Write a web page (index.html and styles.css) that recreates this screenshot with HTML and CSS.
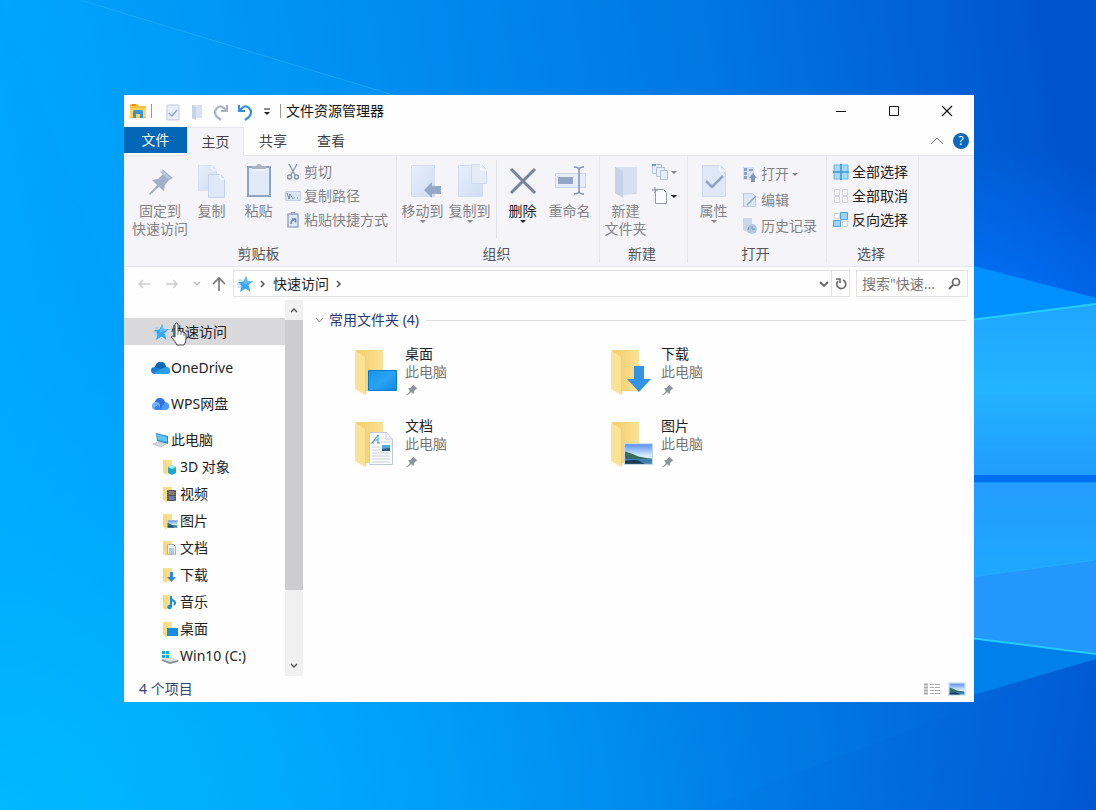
FILE: index.html
```html
<!DOCTYPE html>
<html lang="zh-CN">
<head>
<meta charset="utf-8">
<meta name="viewport" content="width=device-width, initial-scale=1">
<title>文件资源管理器</title>
<link rel="stylesheet" href="styles.css">
</head>
<body>
<svg width="0" height="0" class="defs" aria-hidden="true">
  <defs>
    <linearGradient id="gFolder" x1="0" x2="1"><stop offset="0" stop-color="#f3ce6c"/><stop offset=".4" stop-color="#f6d47a"/><stop offset="1" stop-color="#fce295"/></linearGradient>
    <linearGradient id="gBlue" x1="0" y1="0" x2="1" y2="1"><stop offset="0" stop-color="#1593ec"/><stop offset=".5" stop-color="#2ba3f4"/><stop offset="1" stop-color="#0d87e2"/></linearGradient>
    <linearGradient id="gPaper" x1="0" x2="1" y2="1"><stop offset="0" stop-color="#e7effb"/><stop offset="1" stop-color="#cfdcf2"/></linearGradient>
    <linearGradient id="gSky" x2="0" y2="1"><stop offset="0" stop-color="#5a8ff0"/><stop offset=".6" stop-color="#d8f1fb"/></linearGradient>
  </defs>
  <symbol id="folder" viewBox="0 0 44 50"><path d="M2 3h27v41H11z" fill="url(#gFolder)"/><path d="M1 3l10 7v38L1 42z" fill="#fbe194"/><path d="M11 10v38l1-2V9z" fill="#f2cf75"/></symbol>
  <symbol id="mini" viewBox="0 0 16 16"><path d="M1 1h9v13H4z" fill="#fae08c"/><path d="M1 1l4 2v13l-4-2z" fill="#f8d97f"/></symbol>
  <symbol id="pin" viewBox="0 0 24 24"><path d="M14 1l9 8-3 1-4 5-1 5-5-4-8 7-1-1 7-8-4-5 5-1 4-4z"/></symbol>
  <symbol id="star" viewBox="0 0 16 16"><path d="M9 0l1.500 5L16 5l-4.500 4 2 7-5-3.500L3 16l1.500-6L1 6l5.500-.5z" fill="#35a7f3"/><path d="M0 8h4M1 11h3M2 4h3" stroke="#8ec9f3" stroke-width="1"/><path d="M9 0l1.500 5L16 5l-5.500 2.500-4 1z" fill="#62bdf8"/></symbol>
  <symbol id="picture" viewBox="0 0 28 21"><path fill="#f5f9fc" stroke="#c9d5df" d="M.5.5h27v20H.5z"/><path fill="url(#gSky)" d="M1 1h26v19H1z"/><path d="M1 8l6 2 7 3 12 2v1H1z" fill="#356c5b"/><path d="M1 15h26v5H1z" fill="#3d80b0"/><path d="M1 17l11-1 8 4H1z" fill="#183b55"/></symbol>
</svg>
<main class="desktop">
  <svg class="wallpaper" viewBox="0 0 1096 810" preserveAspectRatio="none" aria-hidden="true">
    <defs>
      <linearGradient id="base" x1="0" y1=".5" x2="1" y2=".38"><stop offset="0" stop-color="#00a8ff"/><stop offset=".4" stop-color="#008df0"/><stop offset=".7" stop-color="#0076e2"/><stop offset="1" stop-color="#0054ce"/></linearGradient>
      <radialGradient id="leftGlow" cx="0" cy="1" r=".7"><stop offset="0" stop-color="#00b9ff"/><stop offset="1" stop-color="#00a8ff" stop-opacity="0"/></radialGradient>
      <radialGradient id="rightGlow" cx=".89" cy=".42" r=".24"><stop offset="0" stop-color="#0078ff"/><stop offset="1" stop-color="#0070ff" stop-opacity="0"/></radialGradient>
      <linearGradient id="beam" x2="0" y2="1"><stop offset="0" stop-color="#1fa6ff"/><stop offset=".5" stop-color="#22b3ff"/><stop offset="1" stop-color="#219cff"/></linearGradient>
      <linearGradient id="beamLow" x2="0" y2="1"><stop offset="0" stop-color="#239cff"/><stop offset="1" stop-color="#1ea8ff"/></linearGradient>
      <linearGradient id="corner" gradientUnits="userSpaceOnUse" x1="700" y1="700" x2="1096" y2="800"><stop offset="0" stop-color="#0078e0" stop-opacity="0"/><stop offset=".8" stop-color="#0060d8" stop-opacity=".8"/><stop offset="1" stop-color="#0056d0"/></linearGradient>
    </defs>
    <path fill="url(#base)" d="M0 0h1096v810H0z"/>
    <path fill="url(#leftGlow)" d="M0 0h1096v810H0z"/>
    <path fill="url(#rightGlow)" d="M0 0h1096v810H0z"/>
    <path fill="#00b0ff" opacity=".13" d="M0 0h80l320 97v20H124v200L0 0z"/>
    <path stroke="#38b5fa" opacity=".45" d="M80 0l320 97"/>
    <path fill="url(#corner)" d="M700 810l396-151v151z"/>
    <path fill="#0090ff" d="M970 265l126 33v8l-126 15z"/>
    <path fill="url(#beam)" d="M970 320l126-17v172H970z"/>
    <path fill="#0070f4" d="M970 475h126v8H970z"/>
    <path fill="url(#beamLow)" d="M970 483h126v77l-126 17z"/>
    <path fill="#2497fc" d="M970 577l126-17v95l-126-17z"/>
    <path fill="#0080ea" d="M970 638l126 17v4l-126 37z"/>
    <path stroke="#24ccff" stroke-width="2" d="M970 320l126-16M970 638l126 16"/>
    <path stroke="#22b0ff" d="M970 577l126-17M970 483h126"/>
  </svg>

  <section class="window" aria-label="文件资源管理器">
    <header class="titlebar">
      <svg class="app-icon" width="18" height="16" viewBox="0 0 18 16"><path d="M1 1h7l2 2h7v12H1z" fill="#f5bd3c"/><path d="M1 5h16v9H1z" fill="#ffd560"/><path d="M3 2h4" stroke="#e0912c" stroke-width="2"/><path d="M4 15V9q0-2 2-2h6q2 0 2 2v6h-3v-4H7v4z" fill="#3c92d3"/></svg>
      <span class="bar-line"></span>
      <div class="quick-tools">
        <button aria-label="属性"><svg width="14" height="17" viewBox="0 0 14 17"><path d="M1 1h12v15H1z" fill="#e9eefa" stroke="#c1c9de"/><path d="M3 9l3 3 5-6" fill="none" stroke="#8fa4cb" stroke-width="1.500"/></svg></button>
        <button aria-label="新建文件夹"><svg width="12" height="17" viewBox="0 0 12 17"><path d="M1 1h10v13H5z" fill="#d9e1f0"/><path d="M1 1l4 2v13l-4-2z" fill="#c6d2e8"/></svg></button>
        <button aria-label="重做"><svg width="16" height="17" viewBox="0 0 16 17"><path d="M14 1v6H8M13 6Q8 0 4 4T4 13l4 3" fill="none" stroke="#a9b3c4" stroke-width="2.200"/></svg></button>
        <button aria-label="撤消"><svg width="16" height="17" viewBox="0 0 16 17"><path d="M2 1v6h6M3 6q5-6 9-2t0 9l-4 3" fill="none" stroke="#398ed5" stroke-width="2.200"/></svg></button>
        <button class="more" aria-label="自定义快速访问工具栏"><svg width="8" height="10" viewBox="0 0 8 10"><path d="M1 2h6" stroke="#222"/><path d="M1 5h6L4 8z" fill="#222"/></svg></button>
      </div>
      <span class="bar-line"></span>
      <h1>文件资源管理器</h1>
      <div class="window-buttons">
        <button aria-label="最小化"><svg width="12" height="12" viewBox="0 0 12 12"><path d="M1 6.500h10" stroke="#111"/></svg></button>
        <button aria-label="最大化"><svg width="12" height="12" viewBox="0 0 12 12"><path d="M1.500 1.500h9v9h-9z" fill="none" stroke="#111"/></svg></button>
        <button aria-label="关闭"><svg width="12" height="12" viewBox="0 0 12 12"><path d="M1 1l10 10M11 1L1 11" stroke="#111" stroke-width="1.200"/></svg></button>
      </div>
    </header>

    <nav class="tabs" aria-label="功能区">
      <button class="tab file">文件</button>
      <button class="tab current">主页</button>
      <button class="tab">共享</button>
      <button class="tab">查看</button>
      <div class="tab-tools">
        <button aria-label="折叠功能区"><svg width="12" height="8" viewBox="0 0 12 8"><path d="M0 7l6-6 6 6" fill="none" stroke="#777"/></svg></button>
        <button class="help" aria-label="帮助">?</button>
      </div>
    </nav>

    <div class="ribbon">
      <section class="group clipboard">
        <div class="tools">
          <button class="large wide muted"><svg width="36" height="40" viewBox="0 0 36 40"><path d="M20 7l11 9-4 2-4 5-1 6-5-4-9 8-1-1 8-9-5-5 6-1 5-5z" fill="#a3b1c8"/><path d="M20 8l9 8-3 1-8-7z" fill="#bac5d8"/></svg>固定到<br>快速访问</button>
          <button class="large muted"><svg width="36" height="40" viewBox="0 0 36 40"><path d="M4.500 3.500h14l4 4v21h-18z" fill="url(#gPaper)" stroke="#d7e1f3"/><path d="M14.500 12.500h12l4 4v19h-16z" fill="#dee8f8" stroke="#c5d4ec"/><path d="M26 12v5h5M18 3v5h5" fill="none" stroke="#f8fbff"/></svg>复制</button>
          <button class="large muted"><svg width="36" height="40" viewBox="0 0 36 40"><path d="M7 5h22v29H7z" fill="#e0eaf9" stroke="#8ea4c2" stroke-width="2"/><path d="M11 7V4h4q1-2 3-2t3 2h4v3z" fill="#a9b5c5"/><path d="M11 8h14" stroke="#f8fbff"/></svg>粘贴</button>
          <div class="stack">
            <button class="small muted"><svg width="16" height="18" viewBox="0 0 16 18"><path d="M4 1l6 11M12 1L6 12" stroke="#8995aa" stroke-width="1.300"/><g fill="none" stroke="#8995aa" stroke-width="1.500"><circle cx="4.500" cy="14" r="2"/><circle cx="11.500" cy="14" r="2"/></g></svg>剪切</button>
            <button class="small muted"><svg width="16" height="18" viewBox="0 0 16 18"><path d="M.5 4.500h15v9H.5z" fill="#dce5f3" stroke="#c1cee3"/><path d="M2 6l2 6 1-5 3 5M9 11h1m2 0h1" fill="none" stroke="#7184a6"/></svg>复制路径</button>
            <button class="small muted"><svg width="16" height="18" viewBox="0 0 16 18"><path d="M3 3h10v13H3z" fill="#dfe8f7" stroke="#98a9c4" stroke-width="1.500"/><path d="M6 1h4v3H6z" fill="#98a9c4"/><path d="M6 13q0-4 3-4M7 8h3.500v3.500" fill="none" stroke="#6581b1" stroke-width="1.500"/></svg>粘贴快捷方式</button>
          </div>
        </div>
        <h2>剪贴板</h2>
      </section>
      <section class="group organize">
        <div class="tools">
          <button class="large muted drop"><svg width="36" height="40" viewBox="0 0 36 40"><path d="M6.500 3.500h23v31h-23z" fill="url(#gPaper)" stroke="#d2def0"/><path d="M19 28l8-8v4h9v8h-9v4z" fill="#96a8c5"/></svg>移动到</button>
          <button class="large muted drop"><svg width="36" height="40" viewBox="0 0 36 40"><path d="M6.500 3.500h24v31h-24z" fill="url(#gPaper)" stroke="#d2def0"/><path d="M19.500 2.500h10l5 5v14h-15z" fill="#e4ecf8" stroke="#ccd9ed"/><path d="M29 2v6h6" fill="none" stroke="#fff"/></svg>复制到</button>
          <span class="tool-line"></span>
          <button class="large drop"><svg width="36" height="40" viewBox="0 0 36 40"><path d="M6 7l24 24M30 7L6 31" stroke="#74839e" stroke-width="3"/></svg>删除</button>
          <button class="large muted"><svg width="36" height="40" viewBox="0 0 36 40"><path d="M3.500 11.500h30v14h-30z" fill="#e5edfa" stroke="#c9d6eb"/><path d="M6 15h15v7H6z" fill="#93a6c5"/><path d="M22 5q5 0 5 3 0-3 5-3M27 8v22M22 32q5 0 5-3 0 3 5 3" fill="none" stroke="#8294b0" stroke-width="1.500"/></svg>重命名</button>
        </div>
        <h2>组织</h2>
      </section>
      <section class="group create">
        <div class="tools">
          <button class="large muted"><svg width="36" height="40" viewBox="0 0 36 40"><path d="M7 5h22v27l-14 1z" fill="#d6e0f0"/><path d="M7 5l8 4v27l-8-5z" fill="#c5d2e8"/></svg>新建<br>文件夹</button>
          <div class="stack">
            <button class="small muted caret" aria-label="新建项目"><svg width="16" height="18" viewBox="0 0 16 18"><g fill="#e5edf9" stroke="#b2c3de"><path d="M.5 1.500h9v9h-9z"/><path d="M4.500 4.500h8v9h-8z"/><path d="M8.500 7.500h7v9h-7z"/></g><path d="M0 2h4" stroke="#7c96bf" stroke-width="2"/></svg></button>
            <button class="small caret" aria-label="轻松访问"><svg width="16" height="18" viewBox="0 0 16 18"><path d="M3.500 2.500h8l3 3v11h-11z" fill="#fbfbfd" stroke="#979ca4"/><path d="M0 3h6M3 0v6" stroke="#8b96a5"/></svg></button>
          </div>
        </div>
        <h2>新建</h2>
      </section>
      <section class="group open">
        <div class="tools">
          <button class="large muted drop"><svg width="36" height="40" viewBox="0 0 36 40"><path d="M6.500 3.500h18l5 5v26h-23z" fill="#dfe8f7" stroke="#ccd9ed"/><path d="M24 3v6h6" fill="none" stroke="#fff"/><path d="M10 19l6 6 11-11" fill="none" stroke="#93a4c1" stroke-width="2.500"/></svg>属性</button>
          <div class="stack loose">
            <button class="small muted caret"><svg width="16" height="18" viewBox="0 0 16 18"><path d="M1 2h11v13H1z" fill="#d5e0f1"/><path d="M2 3h3v3H2zm0 4h3v3H2zm0 4h3v3H2zM7 4h4v2H7z" fill="#8c9fbe"/><path d="M9 17v-4H7l4-5 4 5h-2v4z" fill="#8197bb"/></svg>打开</button>
            <button class="small muted"><svg width="16" height="18" viewBox="0 0 16 18"><path d="M1.500 2.500h9l3 3v10h-12z" fill="#dce7f6" stroke="#b8c9e2"/><path d="M5 14l9-9" stroke="#8ea4c4" stroke-width="1.500"/></svg>编辑</button>
            <button class="small muted"><svg width="16" height="18" viewBox="0 0 16 18"><path d="M1 1h9v14H5l-4-2z" fill="#cbd8eb"/><circle cx="10" cy="12" r="5" fill="#b3c7e4"/><path d="M10 9v3h3M7 10l-1 3" fill="none" stroke="#7991b9"/></svg>历史记录</button>
          </div>
        </div>
        <h2>打开</h2>
      </section>
      <section class="group select">
        <div class="tools">
          <div class="stack">
            <button class="small"><svg width="16" height="18" viewBox="0 0 16 18"><path d="M1 2h14v14H1z" fill="#a8daf8" stroke="#6bb3e6"/><path d="M8 1v16M0 9h16" stroke="#3b96d6" stroke-width="1.500"/></svg>全部选择</button>
            <button class="small"><svg width="16" height="18" viewBox="0 0 16 18"><path d="M1.500 2.500h5v6h-5zm8 0h5v6h-5zm-8 7h5v6h-5zm8 0h5v6h-5z" fill="#fafafd" stroke="#d3d5da"/></svg>全部取消</button>
            <button class="small"><svg width="16" height="18" viewBox="0 0 16 18"><path d="M1.500 2.500h5v5h-5zm8 8h5v5h-5z" fill="#f8f9fd" stroke="#d3d5da"/><path d="M7.500 1.500h7v7h-7zm-7 8h7v6h-7z" fill="#9bd4f7" stroke="#53a2da"/></svg>反向选择</button>
          </div>
        </div>
        <h2>选择</h2>
      </section>
    </div>

    <div class="address-row">
      <div class="history">
        <button aria-label="后退"><svg width="14" height="14" viewBox="0 0 14 14"><path d="M13 7H2m4-4L2 7l4 4" fill="none" stroke="#ccc" stroke-width="1.500"/></svg></button>
        <button aria-label="前进"><svg width="14" height="14" viewBox="0 0 14 14"><path d="M1 7h11M8 3l4 4-4 4" fill="none" stroke="#ccc" stroke-width="1.500"/></svg></button>
        <button class="recent" aria-label="最近位置"><svg width="8" height="8" viewBox="0 0 8 8"><path d="M1 2l3 3 3-3" fill="none" stroke="#bbb" stroke-width="1.300"/></svg></button>
        <button class="up" aria-label="向上"><svg width="14" height="16" viewBox="0 0 14 16"><path d="M7 15V2M1 8l6-6 6 6" fill="none" stroke="#777" stroke-width="1.600"/></svg></button>
      </div>
      <div class="address">
        <svg width="16" height="16"><use href="#star"/></svg>
        <svg width="6" height="8" viewBox="0 0 6 8"><path d="M1 1l3 3-3 3" fill="none" stroke="#555" stroke-width="1.500"/></svg>
        <button class="crumb">快速访问</button>
        <svg width="6" height="8" viewBox="0 0 6 8"><path d="M1 1l3 3-3 3" fill="none" stroke="#555" stroke-width="1.500"/></svg>
        <button class="history-drop" aria-label="以前的位置"><svg width="10" height="8" viewBox="0 0 10 8"><path d="M1 2l4 4 4-4" fill="none" stroke="#666" stroke-width="1.800"/></svg></button>
        <button class="refresh" aria-label="刷新"><svg width="12" height="14" viewBox="0 0 12 14"><path d="M1 2h4v4M8 3a4.500 4.500 0 1 1-5 1" fill="none" stroke="#666" stroke-width="1.600"/></svg></button>
      </div>
      <label class="search">
        <input type="text" aria-label="搜索快速访问" placeholder='搜索"快速...'>
        <svg width="13" height="13" viewBox="0 0 13 13"><circle cx="8" cy="5" r="3.500" fill="none" stroke="#666" stroke-width="1.700"/><path d="M5 8l-4 4" stroke="#666" stroke-width="2"/></svg>
      </label>
    </div>

    <div class="body">
      <nav class="tree" aria-label="导航窗格">
        <a href="#" class="root selected"><svg width="17" height="16" viewBox="-1 0 17 16"><use href="#star" width="16" height="16"/></svg>快速访问
          <svg class="pointer" width="17" height="24" viewBox="0 0 17 24"><path d="M5 14V3q0-2 1.500-2T8 3v6q3-1 3 1 3-1 3 1 2 0 2 2v4q0 3-2 6H7q-1-3-6-8 1-2 4 0z" fill="#fff" stroke="#444"/><path d="M8 9v4m3-3v3m3-2v3" stroke="#777"/></svg></a>
        <a href="#" class="root"><svg width="19" height="16" viewBox="0 0 19 16"><path d="M4 7q1-5 6-5 4 0 5 5 4 0 4 4 0 3-3 3H4q-4 0-4-4 0-3 4-3z" fill="#1681d2"/><path d="M4 7q1-5 6-5 4 0 5 5l-5 2z" fill="#0a68b8"/><path d="M3 13l7-4 5-2q4 0 4 4 0 3-3 3H4z" fill="#299fe9"/></svg>OneDrive</a>
        <a href="#" class="root"><svg width="19" height="16" viewBox="0 0 19 16"><path d="M4 7q0-5 5-5 4 0 5 4 4 1 4 4 0 4-4 4H6z" fill="#2e73df"/><path d="M9 14l5-8q4 1 4 4 0 4-4 4z" fill="#4b9cf6"/><circle cx="5" cy="10" r="4" fill="#6eb0fa"/><path d="M3 12l4-3 4 5H5z" fill="#3a83e8"/></svg>WPS网盘</a>
        <a href="#" class="root"><svg width="17" height="16" viewBox="0 0 17 16"><path d="M4 1l12 3v8L5 9z" fill="#248bd2"/><path d="M5 2l10 3v5L6 8z" fill="#65c2f4"/><path d="M1 12l6-2 7 2-5 3z" fill="#d5d9dc" stroke="#a0a8ad" stroke-width=".6"/></svg>此电脑</a>
        <a href="#" class="leaf"><svg width="16" height="16" viewBox="0 0 16 16"><use href="#mini"/><path d="M6 8l4-2 4 2v6l-4 2-4-2z" fill="#23a6c8"/><path d="M6 8l4-2 4 2-4 2z" fill="#a7eef4"/></svg>3D 对象</a>
        <a href="#" class="leaf"><svg width="16" height="16" viewBox="0 0 16 16"><use href="#mini"/><path d="M5 4h9v11H5z" fill="#4c4b58"/><path d="M7 5h5v4H7z" fill="#8c7864"/><path d="M7 10h5v4H7z" fill="#6382b1"/><path d="M6 4v11m7-11v11" stroke="#aaa" stroke-dasharray="1 1"/></svg>视频</a>
        <a href="#" class="leaf"><svg width="16" height="16" viewBox="0 0 16 16"><use href="#mini"/><use href="#picture" x="5" y="7" width="11" height="8"/></svg>图片</a>
        <a href="#" class="leaf"><svg width="16" height="16" viewBox="0 0 16 16"><use href="#mini"/><path d="M5.500 4.500h6l2 2v8h-8z" fill="#f2f7fc" stroke="#a7b4c0"/><path d="M7 9h5m-5 2h5m-5 2h5" stroke="#6d9dc9"/></svg>文档</a>
        <a href="#" class="leaf"><svg width="16" height="16" viewBox="0 0 16 16"><use href="#mini"/><path d="M8 5h3v5h3l-4.500 5L5 10h3z" fill="#3388dc"/></svg>下载</a>
        <a href="#" class="leaf"><svg width="16" height="16" viewBox="0 0 16 16"><use href="#mini"/><path d="M9 2v11M9 3q0 3 3 4 2 2 0 4" fill="none" stroke="#168fdf" stroke-width="2"/><circle cx="7.500" cy="13" r="2.300" fill="#168fdf"/></svg>音乐</a>
        <a href="#" class="leaf"><svg width="16" height="16" viewBox="0 0 16 16"><use href="#mini"/><path d="M5 7h11v8H5z" fill="#158de2"/></svg>桌面</a>
        <a href="#" class="leaf"><svg width="16" height="16" viewBox="0 0 16 16"><path d="M0 11l9-2 7 3-8 2z" fill="#dce0e2"/><path d="M0 11l8 3 8-2v2l-8 2-8-3z" fill="#8b9094"/><path d="M0 3h3v3H0zm4 0h3v3H4zM0 7h3v3H0zm4 0h3v3H4z" fill="#12a8df"/></svg>Win10 (C:)</a>
      </nav>
      <div class="scrollbar" aria-hidden="true">
        <div class="scroll-end"><svg width="8" height="6" viewBox="0 0 8 6"><path d="M1 5l3-3 3 3" fill="none" stroke="#555" stroke-width="1.500"/></svg></div>
        <div class="thumb"></div>
        <div class="track"></div>
        <div class="scroll-end"><svg width="8" height="6" viewBox="0 0 8 6"><path d="M1 1l3 3 3-3" fill="none" stroke="#555" stroke-width="1.500"/></svg></div>
      </div>
      <section class="content">
        <h2 class="section-title"><svg width="9" height="7" viewBox="0 0 9 7"><path d="M1 1l3.500 4L8 1" fill="none" stroke="#888"/></svg><span>常用文件夹 (4)</span></h2>
        <div class="tiles">
          <a href="#" class="tile"><svg width="44" height="50" viewBox="0 0 44 50"><use href="#folder"/><path d="M14.500 23.500h28v20h-28z" fill="url(#gBlue)" stroke="#0878ce"/></svg><span class="info"><b>桌面</b><span>此电脑</span><svg class="pinned" width="12" height="12"><use href="#pin"/></svg></span></a>
          <a href="#" class="tile"><svg width="44" height="50" viewBox="0 0 44 50"><use href="#folder"/><path d="M24 19h10v13h7L29 45 17 32h7z" fill="#3493e3"/></svg><span class="info"><b>下载</b><span>此电脑</span><svg class="pinned" width="12" height="12"><use href="#pin"/></svg></span></a>
          <a href="#" class="tile"><svg width="44" height="50" viewBox="0 0 44 50"><use href="#folder"/><path d="M15.500 13.500h17l6 7v25h-23z" fill="#fcfdfe" stroke="#c3cbd2"/><path d="M32 13v7h7" fill="none" stroke="#c3cbd2"/><path d="M18 24l6-8v8m-4-3h4m-7 3h3m3 0h3" fill="none" stroke="#3694cf"/><path d="M18 28h8m-8 3h8m-8 3h18m-18 3h18m-18 3h18m-18 3h18m-10-20h10" stroke="#c5ccd2"/><path d="M28 26h8v6h-8z" fill="#55aae0"/><path d="M28 30l8-1v3h-8z" fill="#25598b"/></svg><span class="info"><b>文档</b><span>此电脑</span><svg class="pinned" width="12" height="12"><use href="#pin"/></svg></span></a>
          <a href="#" class="tile"><svg width="44" height="50" viewBox="0 0 44 50"><use href="#folder"/><use href="#picture" x="14" y="24" width="29" height="22"/></svg><span class="info"><b>图片</b><span>此电脑</span><svg class="pinned" width="12" height="12"><use href="#pin"/></svg></span></a>
        </div>
      </section>
    </div>

    <footer class="status">
      <span>4 个项目</span>
      <div class="views">
        <button aria-label="详细信息"><svg width="16" height="13" viewBox="0 0 16 13"><path d="M0 1.500h4m-4 3h4m-4 3h4m-4 3h4" stroke="#aaa" stroke-width="2"/><path d="M6 1.500h4m1 0h5m-10 3h4m1 0h5m-10 3h4m1 0h5m-10 3h4m1 0h5" stroke="#aaa"/></svg></button>
        <button class="active" aria-label="大图标"><svg width="16" height="12"><use href="#picture"/></svg></button>
      </div>
    </footer>
  </section>
</main>
</body>
</html>
```

FILE: styles.css
```css
* { box-sizing: border-box; }

body {
  margin: 0;
  font: 14px/18px "Noto Sans", "Noto Sans CJK SC", sans-serif;
  color: #222;
}

h1, h2 { margin: 0; font: inherit; }
a { color: inherit; text-decoration: none; }

button {
  padding: 0;
  border: 0;
  background: none;
  color: inherit;
  font: inherit;
}

svg { display: block; flex: none; }
.defs { position: absolute; }

.desktop {
  position: relative;
  display: flex;
  min-height: 100vh;
  padding: 95px 122px 108px 124px;
}

.wallpaper {
  position: absolute;
  inset: 0;
  width: 100%;
  height: 100%;
}

.window {
  position: relative;
  display: flex;
  flex: 1;
  flex-direction: column;
  min-width: 0;
  background: #fefefe;
}

/* Title bar */
.titlebar {
  display: flex;
  align-items: center;
  height: 32px;
  padding-left: 5px;
}
.bar-line { width: 1px; height: 14px; margin: 0 5px 0 4px; background: #999; }
.quick-tools { display: flex; align-items: center; padding-left: 4px; }
.quick-tools button { display: grid; place-items: center; width: 24px; height: 24px; padding-top: 2px; }
.quick-tools .more { width: 19px; }
.titlebar h1 { color: #111; }
.window-buttons { display: flex; margin-left: auto; padding-right: 1px; }
.window-buttons button { display: grid; place-items: center; width: 53px; height: 32px; }

/* Tabs */
.tabs { display: flex; height: 28px; }
.tab { width: 58px; height: 28px; color: #444; }
.tab.file { width: 63px; height: 26px; background: #0366b6; color: #fff; }
.tab.current {
  z-index: 1;
  width: 57px;
  height: 29px;
  border: 1px solid #e6e6ea;
  border-bottom: 0;
  background: #f5f5f9;
}
.tab-tools { display: flex; align-items: center; gap: 10px; margin-left: auto; padding-right: 5px; }
.help {
  width: 16px;
  height: 16px;
  border-radius: 50%;
  background: #0b68bd;
  color: #fff;
  font-size: 12px;
  line-height: 16px;
}

/* Ribbon */
.ribbon {
  display: flex;
  height: 112px;
  border-top: 1px solid #e6e6ea;
  border-bottom: 1px solid #e6e6ea;
  background: #f5f5f9;
}
.group {
  display: flex;
  flex: none;
  flex-direction: column;
  justify-content: space-between;
  margin-bottom: 3px;
  border-right: 1px solid #e6e6ec;
}
.group h2 { padding-right: 3px; color: #555; text-align: center; }
.clipboard { width: 273px; }
.organize { width: 203px; }
.create { width: 88px; }
.open { width: 139px; }
.select { width: 92px; }
.tools { display: flex; padding-left: 2px; }
.clipboard .tools { padding-left: 8px; }
.select .tools { padding-left: 3px; }
.large {
  display: flex;
  flex: none;
  flex-direction: column;
  align-items: center;
  width: 47px;
  padding-top: 6px;
  white-space: nowrap;
}
.large.wide { width: 56px; }
.muted { color: #848488; }
.drop::after, .caret::after {
  content: "";
  border: 3px solid transparent;
  border-top-color: currentColor;
  border-bottom: 0;
}
.tool-line { width: 1px; height: 78px; margin: 4px 2px 0 3px; background: #e0e1e7; }
.stack { display: flex; flex-direction: column; padding: 4px 0 0 3px; }
.small {
  display: flex;
  align-items: center;
  gap: 3px;
  height: 24px;
  white-space: nowrap;
}
.loose { padding: 5px 0 0 5px; }
.loose .small { height: 26px; gap: 3px; }

/* Address row */
.address-row { display: flex; align-items: center; height: 33px; padding-right: 6px; }
.history { display: flex; align-items: center; width: 109px; padding-left: 13px; gap: 14px; }
.history .recent { margin-right: -3px; }
.address {
  display: flex;
  flex: 1;
  align-items: center;
  gap: 7px;
  height: 27px;
  padding-left: 3px;
  border: 1px solid #e3e3e3;
}
.history-drop { margin-left: auto; }
.history-drop + .refresh {
  display: grid;
  place-items: center;
  width: 18px;
  height: 25px;
  margin-left: -5px;
  border-left: 1px solid #e3e3e3;
}
.search {
  display: flex;
  align-items: center;
  width: 112px;
  height: 27px;
  margin-left: 6px;
  padding: 0 6px 0 5px;
  border: 1px solid #e3e3e3;
}
.search input { flex: 1; width: 0; padding: 0; border: 0; outline: 0; background: none; font: inherit; }
.search input::placeholder { color: #777; opacity: 1; }

/* Body */
.body { display: flex; flex: 1; }
.tree { width: 161px; padding-top: 18px; }
.tree a { display: flex; align-items: center; height: 27px; gap: 2px; padding-left: 38px; }
.tree .root { margin-bottom: 9px; padding-left: 27px; gap: 1px; }
.tree .root:nth-child(4) { margin-bottom: 0; }
.tree .root > svg:first-child { width: 19px; }
.tree .selected { position: relative; background: #d9d9db; }
.pointer { position: absolute; left: 46px; top: 4px; }

.scrollbar { display: flex; flex-direction: column; width: 18px; background: #f0f0f1; }
.scroll-end { display: grid; place-items: center; height: 20px; }
.thumb { flex: 270; background: #cdcdcf; }
.track { flex: 66; }

.content { flex: 1; padding: 11px 8px 0 12px; }
.section-title { display: flex; align-items: center; color: #26397a; }
.section-title span { margin: 0 7px 0 5px; }
.section-title::after { content: ""; flex: 1; height: 1px; background: #ddd; }
.tiles { display: grid; grid-template-columns: 256px 1fr; grid-auto-rows: 72px; padding: 16px 0 0 39px; }
.tile { display: flex; gap: 7px; }
.tile > svg { margin-top: 2px; }
.info { display: flex; flex-direction: column; color: #777; }
.info b { color: #222; font-weight: 400; }
.pinned { margin: 3px 0 0 1px; fill: #8d9299; }

/* Status bar */
.status {
  display: flex;
  align-items: center;
  justify-content: space-between;
  height: 26px;
  padding: 0 8px 0 15px;
  color: #34466f;
}
.views { display: flex; align-items: center; gap: 8px; }
.views .active { padding: 1px; background: #d6eafa; }
```
